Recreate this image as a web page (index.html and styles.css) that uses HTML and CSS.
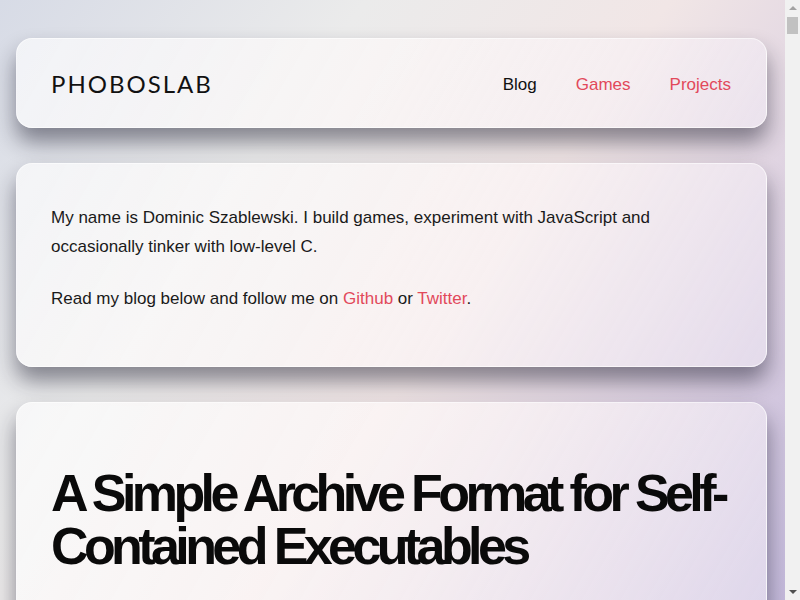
FILE: index.html
```html
<!DOCTYPE html>
<html lang="en">
<head>
  <meta charset="UTF-8" />
  <meta name="viewport" content="width=device-width, initial-scale=1.0" />
  <title>PhobosLab</title>
  <link rel="stylesheet" href="styles.css">
</head>
<body>
  <div class="page">
    <header class="card header">
      <a class="logo" href="#">PHOBOSLAB</a>
      <nav class="nav">
        <a href="#" class="active">Blog</a>
        <a href="#">Games</a>
        <a href="#">Projects</a>
      </nav>
    </header>

    <section class="card intro">
      <p>My name is Dominic Szablewski. I build games, experiment with JavaScript and occasionally tinker with low-level C.</p>
      <p>Read my blog below and follow me on <a href="#">Github</a> or <a href="#">Twitter</a>.</p>
    </section>

    <article class="card post">
      <h1>A Simple Archive Format for Self-Contained Executables</h1>
      <p>I'm currently working on a small game framework in C. One of the goals is to produce a single executable that contains all the assets.</p>
    </article>
  </div>

  <div class="scrollbar">
    <span class="arrow up"></span>
    <span class="thumb"></span>
    <span class="arrow down"></span>
  </div>
</body>
</html>
```

FILE: styles.css
```css
html {
  min-height: 100%;
  background: linear-gradient(125deg, #d7dbe6 0%, #ebebeb 30%, #f1e6e6 55%, #d9cde0 80%, #c4badc 100%) fixed;
}
body {
  margin: 0;
  font-family: "Liberation Sans", Arial, sans-serif;
  font-size: 17px;
  color: #1a1a1a;
}
a {
  color: #e2495b;
  text-decoration: none;
}
.page {
  padding: 38px 33px 40px 16px;
}
.card {
  background: linear-gradient(120deg, rgba(255,255,255,0.65) 0%, rgba(255,250,250,0.6) 50%, rgba(245,240,250,0.45) 100%);
  border: 1px solid rgba(255,255,255,0.6);
  border-radius: 16px;
  box-shadow: 0 14px 22px rgba(20,20,40,0.48);
  margin-bottom: 35px;
}
.header {
  height: 88px;
  padding: 0 35px 0 34px;
  display: flex;
  align-items: center;
  justify-content: space-between;
}
.logo {
  font-family: Lato, sans-serif;
  font-size: 24px;
  letter-spacing: 2px;
  color: #111;
}
.nav {
  display: flex;
  gap: 39px;
  padding-top: 4px;
}
.nav a.active {
  color: #111;
}
.intro {
  padding: 39px 34px 30px;
  line-height: 29px;
}
.intro p {
  margin: 0 0 23px;
}
.post {
  padding: 64px 34px 40px;
  min-height: 300px;
}
.post h1 {
  margin: 0 0 45px;
  font-size: 52px;
  line-height: 53px;
  letter-spacing: -4.6px;
  color: #0a0a0a;
}
.post p {
  line-height: 29px;
}

/* classic scrollbar drawn over the right edge */
.scrollbar {
  position: fixed;
  top: 0;
  right: 0;
  bottom: 0;
  width: 15px;
  background: #f1f1f1;
}
.thumb {
  position: absolute;
  top: 17px;
  left: 2px;
  width: 11px;
  height: 17px;
  background: #c1c1c1;
}
.arrow {
  position: absolute;
  left: 4px;
  width: 0;
  height: 0;
  border-left: 4px solid transparent;
  border-right: 4px solid transparent;
}
.arrow.up {
  top: 6px;
  border-bottom: 4px solid #a3a3a3;
}
.arrow.down {
  bottom: 6px;
  border-top: 4px solid #505050;
}
```
